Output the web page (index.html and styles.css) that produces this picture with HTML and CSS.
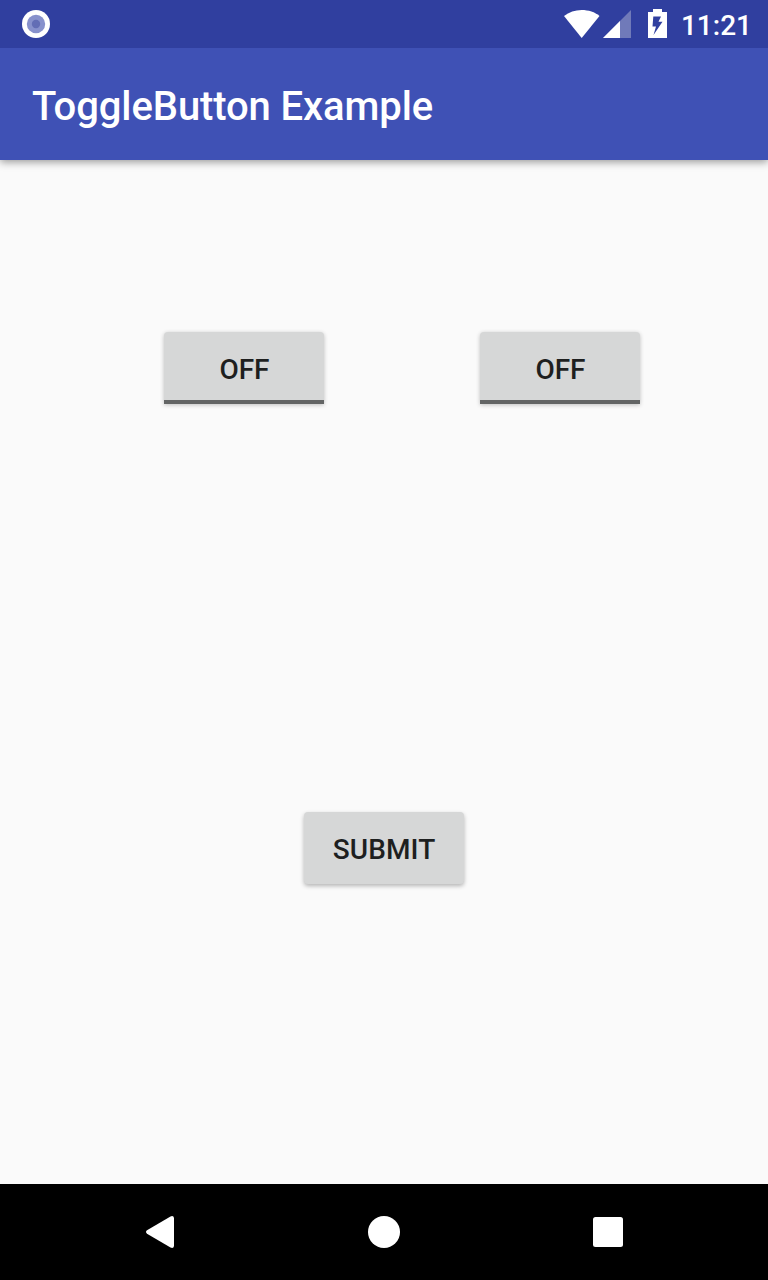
FILE: index.html
```html
<!DOCTYPE html>
<html lang="en">
<head>
<meta charset="utf-8">
<title>ToggleButton Example</title>
<link rel="stylesheet" href="styles.css">
</head>
<body>
<div class="screen">
  <div class="status-bar">
    <svg class="notification" width="28" height="28" viewBox="0 0 28 28">
      <circle cx="14" cy="14" r="14" fill="#fff"/>
      <circle cx="14" cy="14" r="9.2" fill="#8791cc"/>
      <circle cx="14" cy="14" r="4.2" fill="#626db5"/>
    </svg>
    <svg class="wifi" width="36" height="28" viewBox="0 0 36 28"><path d="M0 6C5 2 11 0 17.700 0S31 2 35.500 6L17.700 28Z" fill="#fff"/></svg>
    <svg class="signal" width="28" height="28" viewBox="0 0 28 28"><path d="M28 0V28H0Z" fill="#707ab9"/><path d="M17 11V28H0Z" fill="#fff"/></svg>
    <svg class="battery" width="19" height="29" viewBox="0 0 19 29"><path fill-rule="evenodd" d="M5 0H14V3H19V29H0V3H5ZM5.300 7.500L4.500 17.500H8L5.500 26L14.500 12.800H10.500L13 7.500Z" fill="#fff"/></svg>
    <span class="clock">11:21</span>
  </div>
  <header class="app-bar"><h1 class="title">ToggleButton Example</h1></header>
  <main class="content">
    <div class="toggles">
      <button class="button toggle" type="button">OFF</button>
      <button class="button toggle" type="button">OFF</button>
    </div>
    <button class="button submit" type="button">SUBMIT</button>
  </main>
  <nav class="nav-bar">
    <svg width="32" height="32" viewBox="0 0 32 32"><path d="M3 14.300L26.500 .5Q29.500 -.8 30 2V30Q29.500 32.800 26.500 31.500L3 17.700Q1 16 3 14.300Z" fill="#fff"/></svg>
    <svg width="32" height="32" viewBox="0 0 32 32"><circle cx="16" cy="16" r="16" fill="#fff"/></svg>
    <svg width="32" height="32" viewBox="0 0 32 32"><rect x="1" y="1" width="30" height="30" rx="2.500" fill="#fff"/></svg>
  </nav>
</div>
</body>
</html>
```
FILE: styles.css
```css
body {
  margin: 0;
  font-family: Roboto, sans-serif;
}

.screen {
  display: flex;
  flex-direction: column;
  width: 768px;
  height: 1280px;
  background: #fafafa;
}

.status-bar {
  z-index: 1;
  display: flex;
  align-items: flex-start;
  box-sizing: border-box;
  height: 48px;
  padding: 10px 16px 0 22px;
  background: #303f9f;
  color: #fff;
}

.notification {
  margin-right: auto;
}

.signal {
  margin-left: 3px;
}

.battery {
  margin: -1px 14px 0 17px;
}

.clock {
  font-size: 28px;
  font-weight: 500;
  line-height: 32px;
}

.app-bar {
  display: flex;
  align-items: center;
  box-sizing: border-box;
  height: 112px;
  padding: 6px 32px 0;
  background: #3f51b5;
  box-shadow: 0 2px 8px rgba(0, 0, 0, 0.4);
}

.title {
  margin: 0;
  color: #fff;
  font-size: 40px;
  font-weight: 500;
  letter-spacing: -0.1px;
  line-height: 48px;
}

.content {
  display: flex;
  flex: 1;
  flex-direction: column;
  align-items: center;
  padding-top: 172px;
}

.toggles {
  display: flex;
  gap: 156px;
  align-self: flex-start;
  margin: 0 0 408px 164px;
}

.button {
  box-sizing: border-box;
  width: 160px;
  height: 72px;
  padding: 4px 0 0;
  border: 0;
  border-radius: 4px;
  background: #d6d7d7;
  box-shadow: 0 2px 4px rgba(0, 0, 0, 0.28);
  color: #1e1f1f;
  font: 500 28px/32px Roboto, sans-serif;
  letter-spacing: 0.1px;
}

.toggle {
  padding: 8px 0 0 1px;
  border-bottom: 4px solid #636565;
  border-radius: 4px 4px 0 0;
  box-shadow: 0 1px 4px rgba(0, 0, 0, 0.24);
  letter-spacing: -0.1px;
}

.nav-bar {
  display: flex;
  align-items: center;
  justify-content: center;
  gap: 192px;
  height: 96px;
  background: #000;
}
```
